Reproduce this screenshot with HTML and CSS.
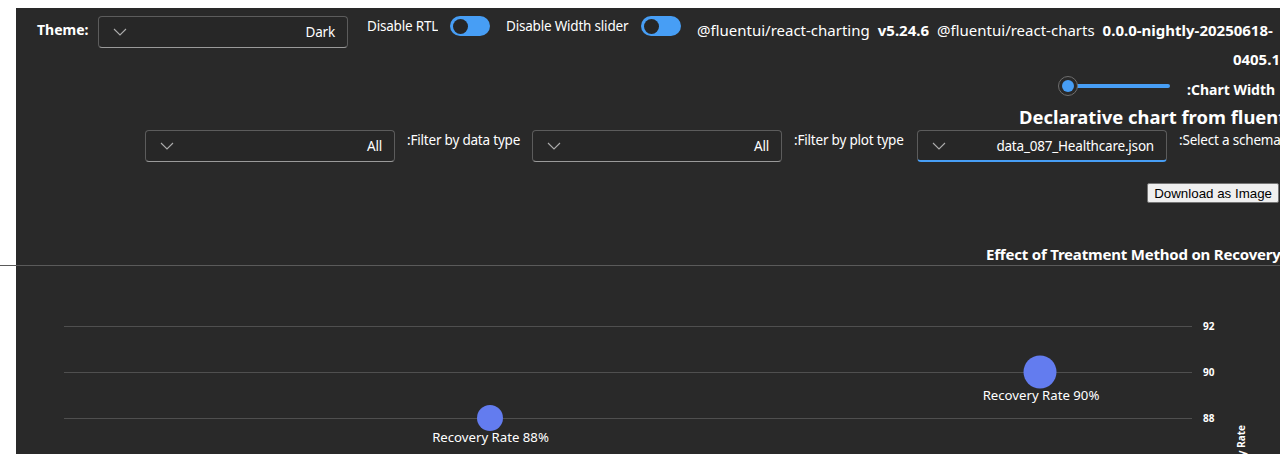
FILE: index.html
```html
<!DOCTYPE html>
<html lang="en">
<head>
<meta charset="utf-8">
<title>Declarative chart</title>
<link rel="stylesheet" href="styles.css">
</head>
<body>
<div class="panel">
  <div class="top-row">
    <span class="theme-label">Theme:</span>
    <div class="dropdown theme-dd">
      <svg class="chev" width="20" height="20" viewBox="0 0 20 20"><path d="M4 7l6 6 6-6" fill="none" stroke="#adadad" stroke-width="1.1"/></svg>
      <span class="dd-value">Dark</span>
    </div>
    <span class="switch-label rtl-label">Disable RTL</span>
    <span class="toggle"><span class="knob"></span></span>
    <span class="switch-label width-label">Disable Width slider</span>
    <span class="toggle"><span class="knob"></span></span>
    <div class="versions">
      <div class="ver-line"><span class="pkg">@fluentui/react-charting</span><b class="ver">v5.24.6</b><span class="pkg">@fluentui/react-charts</span><b class="ver">0.0.0-nightly-20250618-</b></div>
      <div class="ver-line2"><b>0405.1</b></div>
    </div>
  </div>

  <div class="slider-row">
    <div class="slider">
      <div class="track"></div>
      <span class="thumb"><span class="thumb-dot"></span></span>
    </div>
    <span class="width-text">:Chart Width</span>
  </div>

  <h1 class="heading">Declarative chart from fluentui</h1>

  <div class="filter-row">
    <div class="dropdown">
      <svg class="chev" width="20" height="20" viewBox="0 0 20 20"><path d="M4 7l6 6 6-6" fill="none" stroke="#adadad" stroke-width="1.1"/></svg>
      <span class="dd-value">All</span>
    </div>
    <span class="filter-label lbl-data">:Filter by data type</span>
    <div class="dropdown">
      <svg class="chev" width="20" height="20" viewBox="0 0 20 20"><path d="M4 7l6 6 6-6" fill="none" stroke="#adadad" stroke-width="1.1"/></svg>
      <span class="dd-value">All</span>
    </div>
    <span class="filter-label lbl-plot">:Filter by plot type</span>
    <div class="dropdown focused">
      <svg class="chev" width="20" height="20" viewBox="0 0 20 20"><path d="M4 7l6 6 6-6" fill="none" stroke="#adadad" stroke-width="1.1"/></svg>
      <span class="dd-value">data_087_Healthcare.json</span>
    </div>
    <span class="filter-label lbl-schema">:Select a schema</span>
  </div>

  <div class="button-row">
    <button class="download" type="button">Download as Image</button>
  </div>

  <div class="chart-title">Effect of Treatment Method on Recovery Rate</div>
  <div class="rule"></div>

  <svg class="chart" width="1264" height="188" viewBox="0 0 1264 188">
    <g stroke="#4f4f4f" stroke-width="1">
      <line x1="48" y1="60.5" x2="1176" y2="60.5"/>
      <line x1="48" y1="106.5" x2="1176" y2="106.5"/>
      <line x1="48" y1="152.5" x2="1176" y2="152.5"/>
    </g>
    <g font-family="'Noto Sans', 'Open Sans', sans-serif" font-size="10" font-weight="700" fill="#ffffff">
      <text x="1187" y="64">92</text>
      <text x="1187" y="110">90</text>
      <text x="1187" y="156">88</text>
    </g>
    <circle cx="474" cy="152" r="13" fill="#637cef"/>
    <circle cx="1024" cy="106" r="16.5" fill="#637cef"/>
    <g font-family="'Noto Sans', 'Open Sans', sans-serif" font-size="13.2" fill="#ffffff" text-anchor="middle">
      <text x="474.5" y="176">Recovery Rate 88%</text>
      <text x="1025" y="134">Recovery Rate 90%</text>
    </g>
    <text transform="translate(1229 159) rotate(-90)" text-anchor="end" font-family="'Noto Sans', 'Open Sans', sans-serif" font-size="10" font-weight="700" fill="#ffffff">Recovery Rate</text>
  </svg>
</div>
</body>
</html>
```

FILE: styles.css
```css
html {
  overflow: hidden;
  background: #ffffff;
}
body {
  margin: 0;
  padding: 8px 0 0 0;
  width: 1280px;
  background: #ffffff;
  font-family: "Noto Sans", "Open Sans", sans-serif;
  font-size: 14px;
  color: #ffffff;
}
.panel {
  margin-left: 16px;
  width: 1264px;
  height: 460px;
  background: #292929;
  box-sizing: border-box;
  padding-top: 8px;
}
.top-row {
  display: flex;
  align-items: flex-start;
  padding-left: 21px;
  height: 58px;
  white-space: nowrap;
}
.theme-label {
  width: 53px;
  margin-right: 8px;
  margin-top: 4px;
  line-height: 20px;
  font-weight: 700;
  font-size: 14px;
}
.dropdown {
  display: flex;
  align-items: center;
  width: 250px;
  height: 32px;
  box-sizing: border-box;
  flex-shrink: 0;
  padding: 0 12px 0 11px;
  background: #272727;
  border: 1px solid #5c5c5c;
  border-bottom-color: #9a9a9a;
  border-radius: 4px;
}
.dropdown.focused {
  border-bottom: 2px solid #479ef5;
}
.chev {
  flex-shrink: 0;
}
.dd-value {
  margin-left: auto;
  font-size: 13.5px;
  letter-spacing: -0.2px;
  white-space: nowrap;
}
.switch-label {
  line-height: 20px;
  font-size: 13.5px;
  letter-spacing: -0.2px;
  overflow: hidden;
}
.rtl-label {
  width: 71px;
  margin-left: 19px;
  margin-right: 12px;
}
.width-label {
  width: 123px;
  margin-left: 16px;
  margin-right: 12px;
}
.toggle {
  display: flex;
  align-items: center;
  flex-shrink: 0;
  width: 40px;
  height: 20px;
  box-sizing: border-box;
  padding-left: 3px;
  border-radius: 10px;
  background: #479ef5;
}
.knob {
  width: 15px;
  height: 15px;
  border-radius: 50%;
  background: #262626;
}
.versions {
  margin-left: 16px;
  flex: 1;
  min-width: 0;
  line-height: 29px;
  font-size: 15px;
}
.ver-line {
  white-space: nowrap;
  overflow: hidden;
}
.pkg {
  margin-right: 8px;
}
.ver {
  margin-right: 8px;
}
.ver-line2 {
  text-align: right;
}
.slider-row {
  display: flex;
  justify-content: flex-end;
  align-items: flex-start;
  height: 30px;
}
.slider {
  position: relative;
  width: 114px;
  height: 24px;
  margin-right: 15px;
  display: flex;
  align-items: center;
}
.track {
  margin-left: 10px;
  width: 102px;
  height: 4px;
  border-radius: 2px;
  background: #479ef5;
}
.thumb {
  position: absolute;
  left: 0;
  top: 2px;
  width: 20px;
  height: 20px;
  box-sizing: border-box;
  border-radius: 50%;
  border: 1px solid #6e6e6e;
  background: #292929;
  display: flex;
  align-items: center;
  justify-content: center;
}
.thumb-dot {
  width: 12px;
  height: 12px;
  border-radius: 50%;
  background: #479ef5;
}
.width-text {
  width: 93px;
  margin-top: 6px;
  line-height: 20px;
  font-weight: 700;
  font-size: 14px;
  white-space: nowrap;
  overflow: hidden;
}
.heading {
  margin: 0;
  padding-left: 1003px;
  height: 26px;
  line-height: 26px;
  font-size: 18.4px;
  font-weight: 700;
  white-space: nowrap;
  overflow: hidden;
}
.filter-row {
  display: flex;
  justify-content: flex-end;
  align-items: flex-start;
  height: 32px;
}
.filter-row .dropdown {
  margin-right: 12px;
}
.filter-label {
  line-height: 20px;
  font-size: 13.5px;
  letter-spacing: -0.2px;
  white-space: nowrap;
  overflow: hidden;
  flex-shrink: 0;
}
.lbl-data {
  width: 114px;
  margin-right: 11px;
}
.lbl-plot {
  width: 112px;
  margin-right: 11px;
}
.lbl-schema {
  width: 101px;
}
.button-row {
  display: flex;
  justify-content: flex-end;
  padding-top: 21px;
  padding-right: 1px;
}
.download {
  height: 20px;
  box-sizing: border-box;
  padding: 0 6px;
  font-family: "Liberation Sans", Arial, sans-serif;
  font-size: 13.33px;
  color: #000000;
  background: #efefef;
  border: 1px solid #767676;
  border-radius: 2px;
}
.chart-title {
  margin-top: 41px;
  padding-left: 970px;
  height: 21px;
  line-height: 20px;
  font-size: 15px;
  font-weight: 700;
  letter-spacing: -0.2px;
  white-space: nowrap;
  overflow: hidden;
}
.rule {
  margin-left: -16px;
  width: 1296px;
  height: 1px;
  background: #5a5a5a;
}
.chart {
  display: block;
}
```
